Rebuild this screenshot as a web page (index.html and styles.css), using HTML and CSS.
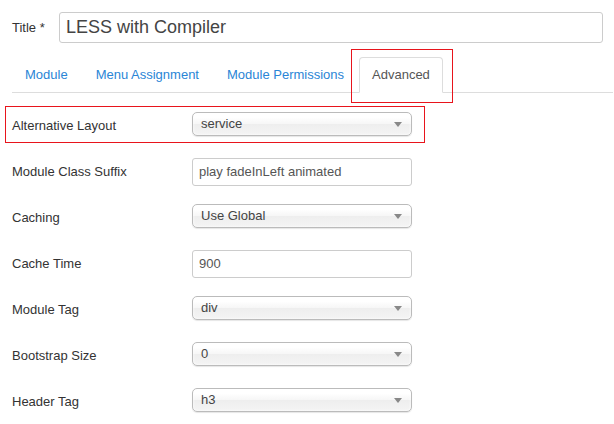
FILE: index.html
```html
<!DOCTYPE html>
<html>
<head>
<meta charset="utf-8">
<link rel="stylesheet" href="styles.css">
</head>
<body>
<div class="page">
  <div class="title-row">
    <label class="title-label">Title *</label>
    <div class="title-input">LESS with Compiler</div>
  </div>
  <ul class="tabs">
    <li class="tab"><a>Module</a></li>
    <li class="tab"><a>Menu Assignment</a></li>
    <li class="tab"><a>Module Permissions</a></li>
    <li class="tab active"><a>Advanced</a></li>
  </ul>
  <div class="form">
    <div class="row"><div class="label">Alternative Layout</div><div class="select"><span>service</span><i class="arrow"></i></div></div>
    <div class="row"><div class="label">Module Class Suffix</div><div class="input">play fadeInLeft animated</div></div>
    <div class="row"><div class="label">Caching</div><div class="select"><span>Use Global</span><i class="arrow"></i></div></div>
    <div class="row"><div class="label">Cache Time</div><div class="input">900</div></div>
    <div class="row"><div class="label">Module Tag</div><div class="select"><span>div</span><i class="arrow"></i></div></div>
    <div class="row"><div class="label">Bootstrap Size</div><div class="select"><span>0</span><i class="arrow"></i></div></div>
    <div class="row"><div class="label">Header Tag</div><div class="select"><span>h3</span><i class="arrow"></i></div></div>
  </div>
  <div class="mark mark-tab"></div>
  <div class="mark mark-row"></div>
</div>
</body>
</html>
```
FILE: styles.css
```css
html, body {
  margin: 0;
  padding: 0;
  background: #fff;
}
body {
  font-family: "Liberation Sans", Arial, sans-serif;
  font-size: 13px;
  color: #333;
}
.page {
  position: relative;
  width: 614px;
  height: 424px;
  overflow: hidden;
}
.title-row {
  display: flex;
  align-items: center;
  padding: 12px 0 0 12px;
}
.title-label {
  width: 47px;
  line-height: 18px;
  color: #333;
}
.title-input {
  box-sizing: border-box;
  width: 544px;
  height: 31px;
  border: 1px solid #ccc;
  border-radius: 3px;
  padding: 0 6px;
  font-size: 18px;
  line-height: 29px;
  color: #444;
}
.tabs {
  list-style: none;
  margin: 14px 1px 0 12px;
  padding: 0;
  display: flex;
  border-bottom: 1px solid #ddd;
}
.tab {
  margin-right: 2px;
  margin-bottom: -1px;
}
.tab a {
  display: block;
  padding: 8px 12px;
  line-height: 18px;
  border: 1px solid transparent;
  border-radius: 4px 4px 0 0;
  color: #2a85d6;
}
.tab.active a {
  border-color: #ddd #ddd transparent;
  background: #fff;
  color: #555;
}
.form {
  padding: 19px 0 0 12px;
}
.row {
  display: flex;
  align-items: flex-start;
  height: 28px;
  margin-bottom: 18px;
}
.label {
  width: 180px;
  padding-top: 5px;
  line-height: 18px;
  color: #333;
}
.select {
  position: relative;
  box-sizing: border-box;
  width: 220px;
  height: 24px;
  padding-left: 8px;
  border: 1px solid #bbb;
  border-radius: 5px;
  background: linear-gradient(#fff 20%, #f6f6f6 50%, #eee 52%, #f4f4f4 100%);
  box-shadow: 0 0 3px #fff inset, 0 1px 1px rgba(0,0,0,0.1);
  line-height: 22px;
  color: #444;
}
.arrow {
  position: absolute;
  right: 9px;
  top: 9px;
  width: 0;
  height: 0;
  border-left: 4px solid transparent;
  border-right: 4px solid transparent;
  border-top: 5px solid #888;
}
.input {
  box-sizing: border-box;
  width: 220px;
  height: 28px;
  padding: 0 6px;
  border: 1px solid #ccc;
  border-radius: 3px;
  line-height: 26px;
  color: #555;
}
.mark {
  position: absolute;
  border: 1px solid #e8141c;
  box-sizing: border-box;
}
.mark-tab {
  left: 351px;
  top: 49px;
  width: 102px;
  height: 54px;
}
.mark-row {
  left: 5px;
  top: 106px;
  width: 420px;
  height: 37px;
}
```
